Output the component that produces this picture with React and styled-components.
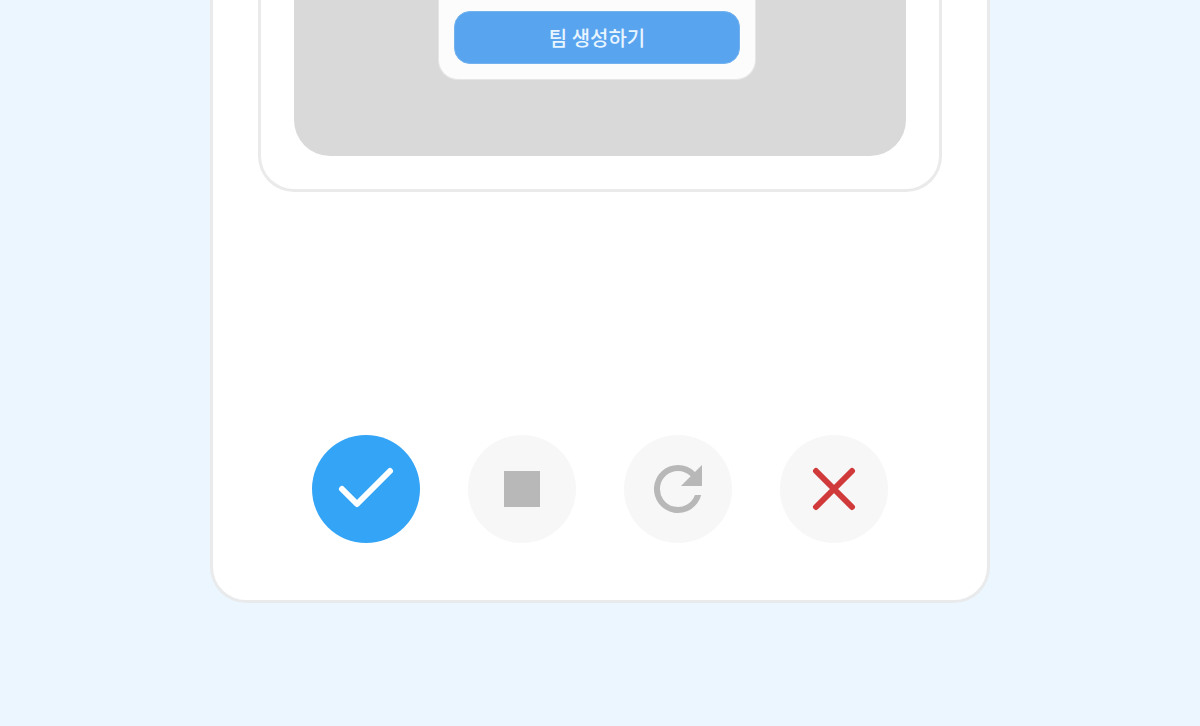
import React from "react";
import styled, { createGlobalStyle } from "styled-components";

const GlobalStyle = createGlobalStyle`
  *, *::before, *::after { box-sizing: border-box; }
  body {
    margin: 0;
    min-height: 100vh;
    background: #ebf6ff;
    font-family: "Noto Sans CJK KR", "Noto Sans", sans-serif;
  }
`;

const Page = styled.main`
  display: flex;
  justify-content: center;
`;

const Card = styled.section`
  width: 100%;
  max-width: 780px;
  padding: 0 45px 57px;
  background: #fff;
  border: 3px solid #e9eaeb;
  border-top: 0;
  border-radius: 0 0 36px 36px;
`;

const Frame = styled.div`
  padding: 0 33px 33px;
  border: 3px solid #eaeaea;
  border-top: 0;
  border-radius: 0 0 36px 36px;
`;

const Preview = styled.div`
  display: flex;
  justify-content: center;
  padding: 0 6px 76px 0;
  background: #d9d9d9;
  border-radius: 0 0 36px 36px;
`;

const Dialog = styled.div`
  width: 318px;
  padding: 11px 15px 15px;
  background: #fcfcfc;
  border: 1px solid #e6e6e6;
  border-top: 0;
  border-radius: 0 0 20px 20px;
`;

const CreateButton = styled.button`
  display: block;
  width: 100%;
  height: 53px;
  padding: 0;
  border: 1px solid #73b2ef;
  border-radius: 16px;
  background: #58a4ef;
  color: #e8f5ff;
  font: 500 20px/30px "Noto Sans CJK KR", "Noto Sans", sans-serif;
  cursor: pointer;
`;

const Actions = styled.div`
  display: flex;
  justify-content: center;
  gap: 48px;
  margin-top: 243px;
`;

const ActionButton = styled.button`
  display: grid;
  place-items: center;
  width: 108px;
  height: 108px;
  padding: 0;
  border: 0;
  border-radius: 50%;
  background: ${({ $primary }) => ($primary ? "#34a5f6" : "#f7f7f7")};
  color: ${({ $color }) => $color};
  cursor: pointer;
`;

const Icon = styled.svg`
  display: block;
  width: 72px;
  height: 72px;
`;

const strokeProps = {
  fill: "none",
  stroke: "currentColor",
  strokeWidth: 6,
  strokeLinecap: "round",
  strokeLinejoin: "round",
};

export default function App() {
  return (
    <>
      <GlobalStyle />
      <Page>
        <Card>
          <Frame>
            <Preview>
              <Dialog>
                <CreateButton type="button">팀 생성하기</CreateButton>
              </Dialog>
            </Preview>
          </Frame>
          <Actions>
            <ActionButton type="button" aria-label="확인" $primary $color="#fff">
              <Icon viewBox="0 0 72 72" aria-hidden="true">
                <path d="M12 36 27 51 60 18" {...strokeProps} />
              </Icon>
            </ActionButton>
            <ActionButton type="button" aria-label="정지" $color="#b8b8b8">
              <Icon viewBox="0 0 72 72" aria-hidden="true">
                <path d="M18 18h36v36H18z" fill="currentColor" />
              </Icon>
            </ActionButton>
            <ActionButton type="button" aria-label="새로고침" $color="#b8b8b8">
              <Icon viewBox="0 0 24 24" aria-hidden="true">
                <path
                  fill="currentColor"
                  d="M17.65 6.35A7.96 7.96 0 0 0 12 4a8 8 0 1 0 7.73 10h-2.08A6 6 0 1 1 12 6c1.66 0 3.14.69 4.22 1.78L13 11h7V4z"
                />
              </Icon>
            </ActionButton>
            <ActionButton type="button" aria-label="닫기" $color="#d03a3a">
              <Icon viewBox="0 0 72 72" aria-hidden="true">
                <path d="M18 18 54 54M54 18 18 54" {...strokeProps} />
              </Icon>
            </ActionButton>
          </Actions>
        </Card>
      </Page>
    </>
  );
}
